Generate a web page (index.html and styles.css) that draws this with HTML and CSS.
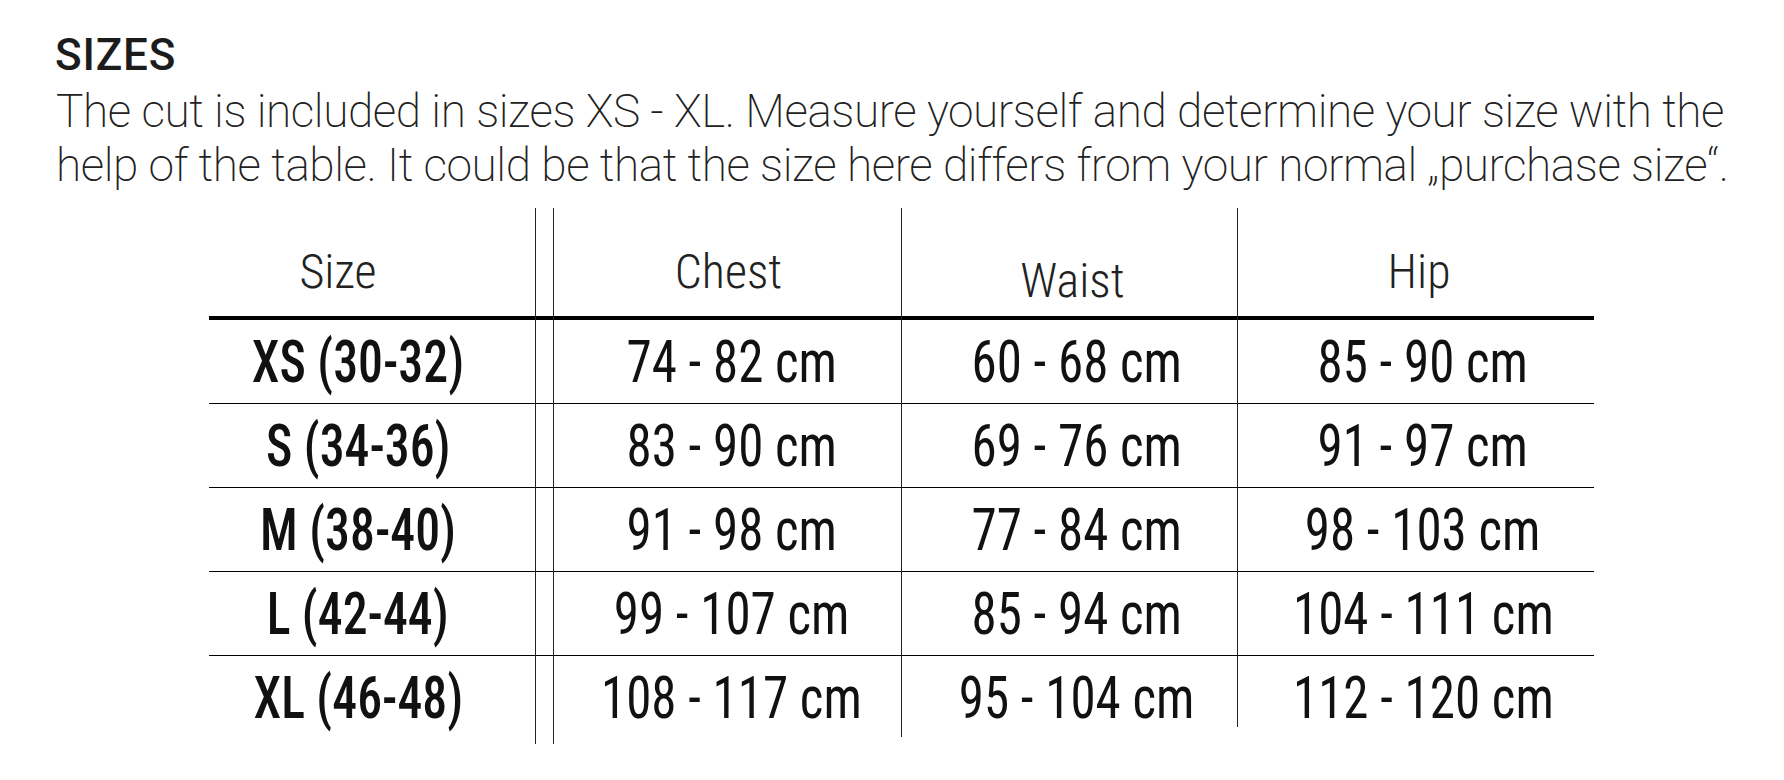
FILE: index.html
```html
<!DOCTYPE html>
<html lang="en">
<head>
<meta charset="utf-8">
<title>Sizes</title>
<link rel="stylesheet" href="styles.css">
</head>
<body>
<main class="page">
  <h1 class="title">SIZES</h1>
  <p class="intro">The cut is included in sizes XS - XL. Measure yourself and determine your size with the help of the table. It could be that the size here differs from your normal „purchase size“.</p>
  <div class="table">
    <div class="col col-size">
      <div class="head"><span class="t">Size</span></div>
      <div class="cell"><span class="t">XS (30-32)</span></div>
      <div class="cell"><span class="t">S (34-36)</span></div>
      <div class="cell"><span class="t">M (38-40)</span></div>
      <div class="cell"><span class="t">L (42-44)</span></div>
      <div class="cell last"><span class="t">XL (46-48)</span></div>
    </div>
    <div class="col col-chest">
      <div class="head"><span class="t">Chest</span></div>
      <div class="cell"><span class="t">74 - 82 cm</span></div>
      <div class="cell"><span class="t">83 - 90 cm</span></div>
      <div class="cell"><span class="t">91 - 98 cm</span></div>
      <div class="cell"><span class="t">99 - 107 cm</span></div>
      <div class="cell last"><span class="t">108 - 117 cm</span></div>
    </div>
    <div class="col col-waist">
      <div class="head"><span class="t">Waist</span></div>
      <div class="cell"><span class="t">60 - 68 cm</span></div>
      <div class="cell"><span class="t">69 - 76 cm</span></div>
      <div class="cell"><span class="t">77 - 84 cm</span></div>
      <div class="cell"><span class="t">85 - 94 cm</span></div>
      <div class="cell last"><span class="t">95 - 104 cm</span></div>
    </div>
    <div class="col col-hip">
      <div class="head"><span class="t">Hip</span></div>
      <div class="cell"><span class="t">85 - 90 cm</span></div>
      <div class="cell"><span class="t">91 - 97 cm</span></div>
      <div class="cell"><span class="t">98 - 103 cm</span></div>
      <div class="cell"><span class="t">104 - 111 cm</span></div>
      <div class="cell last"><span class="t">112 - 120 cm</span></div>
    </div>
  </div>
</main>
</body>
</html>
```
FILE: styles.css
```css
* { box-sizing: border-box; }
html, body { margin: 0; background: #fff; }
body { font-family: Roboto, "Liberation Sans", sans-serif; color: #1c1c1c; }

.page { padding: 33px 0 0 55px; }

.title {
  margin: 0;
  font-size: 44px;
  line-height: 44px;
  font-weight: 500;
  letter-spacing: 0.8px;
  color: #1c1c1c;
}

.intro {
  margin: 7px 0 0 1px;
  width: 1690px;
  font-size: 46px;
  line-height: 54px;
  font-weight: 200;
  letter-spacing: -0.45px;
  color: #222;
}

.table {
  display: flex;
  align-items: flex-start;
  margin: 16px 0 0 154px;
  width: 1385px;
}

.col { display: flex; flex-direction: column; position: relative; }
.col-size { width: 344px; padding-bottom: 17px; }
.col-chest { width: 348px; border-left: 1px solid #222; padding-bottom: 17px; }
.col-waist { width: 336px; border-left: 1px solid #222; padding-bottom: 10px; }
.col-hip { width: 357px; border-left: 1px solid #222; }

.col-size::after {
  content: "";
  position: absolute;
  top: 0;
  bottom: 0;
  left: 326px;
  border-left: 1px solid #222;
}

.head {
  height: 112px;
  border-bottom: 4px solid #000;
  display: flex;
  justify-content: center;
  align-items: flex-end;
  padding-bottom: 20px;
  font-size: 48px;
  line-height: 48px;
  font-weight: 300;
  font-stretch: 78%;
  color: #222;
}

.col-size .head { padding-right: 86px; }
.col-chest .head { padding-left: 2px; }
.col-waist .head { padding-bottom: 11px; padding-left: 6px; }
.col-hip .head { padding-left: 6px; }

.cell {
  height: 84px;
  border-bottom: 1px solid #000;
  text-align: center;
  font-size: 60px;
  line-height: 84px;
  font-weight: 400;
  font-stretch: 75%;
  color: #111;
  white-space: nowrap;
}

.cell.last { height: 71px; border-bottom: 0; }

.col-size .cell { font-weight: 500; padding-right: 46px; }
.col-chest .cell { padding-left: 8px; }
.col-waist .cell { padding-left: 14px; }
.col-hip .cell { padding-left: 14px; }

.cell .t { display: inline-block; transform: scaleX(0.85); }
.col-size .cell .t { transform: scaleX(0.83); }
```
